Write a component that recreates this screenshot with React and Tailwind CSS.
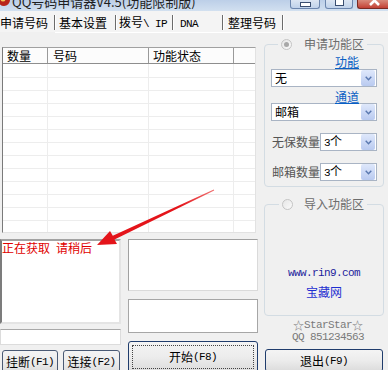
import React from 'react';

const MONO = "font-['Liberation_Mono',monospace] text-[11px] tracking-[-0.6px]";

const Asc = ({ children, className = '' }) => (
  <span className={`${MONO} ${className}`}>{children}</span>
);

const TabSep = () => (
  <div className="flex h-[15px] shrink-0">
    <div className="w-px bg-[#6b6b6b]" />
    <div className="w-px bg-white" />
  </div>
);

const Radio = ({ checked }) => (
  <span className="flex h-[11px] w-[11px] shrink-0 items-center justify-center rounded-full border border-[#c4c4c4] bg-linear-to-br from-[#e6e6e6] to-[#fafafa]">
    {checked && <span className="h-[5px] w-[5px] rounded-full bg-[#a8a8a8]" />}
  </span>
);

const Combo = ({ value, className = '' }) => (
  <div className={`flex h-[18px] items-center border border-[#a9b4c4] bg-white ${className}`}>
    <span className="flex-1 pl-[3px] leading-[14px]">{value}</span>
    <span className="mr-px flex h-[16px] w-[14px] items-center justify-center rounded-[2px] bg-linear-to-b from-[#dfe8fb] to-[#b9caf0]">
      <svg width="7" height="5" viewBox="0 0 7 5">
        <polyline points="0.7,0.7 3.5,3.7 6.3,0.7" fill="none" stroke="#5a78b0" strokeWidth="1.4" />
      </svg>
    </span>
  </div>
);

const WinButton = ({ children, primary, focus, className = '' }) => (
  <div
    className={`flex items-center justify-center rounded-[3px] border bg-linear-to-b from-[#f4f4f4] via-[#ececec] to-[#dcdcdc] ${
      primary ? 'border-[#1f3c6c]' : 'border-[#4a5a74]'
    } ${className}`}
  >
    {focus ? (
      <div className="flex h-[calc(100%-6px)] w-[calc(100%-6px)] items-center justify-center border border-dotted border-[#444]">
        {children}
      </div>
    ) : (
      children
    )}
  </div>
);

const rows = Array.from({ length: 13 });

export default function App() {
  return (
    <div className="relative h-[370px] w-[388px] overflow-hidden bg-[#f0f0f0] font-['Noto_Sans_CJK_SC',sans-serif] text-[12px] leading-[14px] text-black">
      {/* Title bar */}
      <div className="flex h-[11px] overflow-hidden bg-linear-to-b from-[#bccfe8] to-[#d2e0f0]">
        <svg width="12" height="11" className="shrink-0">
          <circle cx="4" cy="0" r="6" fill="#b8241a" />
          <circle cx="3" cy="-1" r="2.5" fill="#f2c45a" />
        </svg>
        <span className="-mt-[5px] whitespace-nowrap text-[13px] leading-[13px] text-[#1e1e1e]">
          QQ号码申请器V4.5(功能限制版)
        </span>
        <div className="ml-auto flex items-start">
          <div className="flex h-[9px] w-[30px] justify-center rounded-b-[3px] border border-t-0 border-[#6c86ad] bg-linear-to-b from-[#dbe5f2] to-[#c0d2ea]">
            <div className="mt-[2px] h-[5px] w-[11px] border border-[#3a4e70] bg-white" />
          </div>
          <div className="ml-[5px] flex h-[9px] w-[28px] justify-center rounded-b-[3px] border border-t-0 border-[#6c86ad] bg-linear-to-b from-[#dbe5f2] to-[#c0d2ea]">
            <div className="-mt-[2px] h-[8px] w-[9px] border border-[#3a4e70] bg-white" />
          </div>
          <div className="ml-[4px] h-[9px] w-[31px] rounded-bl-[3px] border border-t-0 border-r-0 border-[#7a2b24] bg-linear-to-b from-[#d88a7c] to-[#c23f35]">
            <svg width="31" height="9">
              <path d="M12 -4 L21 5 M21 -4 L12 5" stroke="white" strokeWidth="2.6" />
            </svg>
          </div>
        </div>
      </div>

      {/* Tabs */}
      <div className="flex h-[21px] items-center bg-[#f4f4f4] pt-[2px] whitespace-nowrap">
        <div className="w-[54px] shrink-0">申请号码</div>
        <TabSep />
        <div className="w-[59px] shrink-0 pl-[3px]">基本设置</div>
        <TabSep />
        <div className="w-[55px] shrink-0 pl-[2px]">
          拨号<Asc>\ IP</Asc>
        </div>
        <TabSep />
        <div className="w-[48px] shrink-0 pl-[6px]">
          <Asc>DNA</Asc>
        </div>
        <TabSep />
        <div className="w-[58px] shrink-0 pl-[4px]">整理号码</div>
        <TabSep />
      </div>
      <div className="ml-[55px] h-px bg-white" />

      <div className="flex">
        {/* Left side */}
        <div className="w-[258px] shrink-0">
          {/* List view */}
          <div className="ml-[2px] mt-[14px] h-[186px] w-[254px] overflow-hidden border border-t-[#a0a0a0] border-l-[#7a7a7a] border-r-[#e2e2e2] border-b-[#e2e2e2] bg-white">
            <div className="flex h-[16px] items-center border-b border-[#8e8e8e] bg-[#fcfcfc] leading-[15px]">
              <div className="h-full w-[45px] border-r border-[#9a9a9a] pl-[4px]">数量</div>
              <div className="h-full w-[101px] border-r border-[#9a9a9a] pl-[5px]">号码</div>
              <div className="h-full w-[85px] border-r border-[#9a9a9a] pl-[4px]">功能状态</div>
              <div className="h-full flex-1" />
            </div>
            {rows.map((_, i) => (
              <div
                key={i}
                className={`flex border-b border-[#ededed] ${i === 0 ? 'h-[14px]' : 'h-[13px]'}`}
              >
                <div className="w-[45px] border-r border-[#ededed]" />
                <div className="w-[101px] border-r border-[#ededed]" />
                <div className="w-[85px] border-r border-[#ededed]" />
                <div className="flex-1" />
              </div>
            ))}
          </div>

          {/* Bottom area */}
          <div className="mt-[6px] flex">
            <div className="w-[121px] shrink-0">
              <div className="h-[85px] border-2 border-t-[#a2a2a2] border-l-[#7c7c7c] border-r-[#e4e4e4] border-b-[#e4e4e4] bg-white text-[#e00000]">
                正在获取<span className="inline-block w-[6px]" />请稍后
              </div>
              <div className="mt-[5px] h-[16px] border border-[#dcdcdc] border-t-[#a8a8a8] bg-white" />
              <div className="mt-[5px] flex gap-[5px] pl-[2px]">
                <WinButton className="h-[24px] w-[56px]">
                  挂断<Asc>(F1)</Asc>
                </WinButton>
                <WinButton className="h-[24px] w-[57px]">
                  连接<Asc>(F2)</Asc>
                </WinButton>
              </div>
            </div>

            <div className="ml-[7px] w-[130px] shrink-0">
              <div className="h-[52px] border border-t-[#a0a0a0] border-l-[#a0a0a0] border-r-[#dadada] border-b-[#dadada] bg-white" />
              <div className="mt-[8px] h-[34px] border border-[#a6a6a6] bg-white" />
              <WinButton primary focus className="mt-[8px] h-[32px] w-full">
                开始<Asc>(F8)</Asc>
              </WinButton>
            </div>
          </div>
        </div>

        {/* Right side */}
        <div className="ml-[6px] w-[120px] shrink-0">
          <fieldset className="mt-[4px] rounded-[4px] border border-[#d3dce3] px-[6px] pb-[5px]">
            <legend className="ml-[7px] flex h-[14px] items-center px-[3px]">
              <Radio checked />
              <span className="ml-[12px] text-[#6d6d6d]">申请功能区</span>
            </legend>
            <div className="mt-[4px] h-[13px] pr-[18px] text-right leading-[13px] text-[#0a5fc4] underline">
              功能
            </div>
            <Combo value="无" className="mt-[1px]" />
            <div className="mt-[3px] h-[13px] pr-[18px] text-right leading-[13px] text-[#0a5fc4] underline">
              通道
            </div>
            <Combo value="邮箱" />
            <div className="mt-[12px] flex items-center">
              <span className="w-[49px] shrink-0 pl-[1px] text-[#555]">无保数量</span>
              <Combo value={<><Asc>3</Asc>个</>} className="flex-1" />
            </div>
            <div className="mt-[12px] flex items-center">
              <span className="w-[49px] shrink-0 pl-[1px] text-[#555]">邮箱数量</span>
              <Combo value={<><Asc>3</Asc>个</>} className="flex-1" />
            </div>
          </fieldset>

          <fieldset className="mt-[10px] h-[119px] rounded-[4px] border border-[#d3dce3] px-[6px]">
            <legend className="ml-[8px] flex h-[14px] items-center px-[3px]">
              <Radio />
              <span className="ml-[11px] text-[#6d6d6d]">导入功能区</span>
            </legend>
            <div className={`mt-[55px] text-center leading-[14px] text-[#1c1c9c] ${MONO}`}>www.rin9.com</div>
            <div className="mt-[5px] text-center leading-[14px] text-[#1f2fd0]">宝藏网</div>
          </fieldset>

          <div className="mt-[4px] pl-[8px] text-[#7a7a7a]">
            <div className="flex h-[11px] items-center justify-center">
              <span className="text-[11px] leading-[11px]">☆</span>
              <Asc className="leading-[11px]">StarStar</Asc>
              <span className="text-[11px] leading-[11px]">☆</span>
            </div>
            <div className="flex h-[12px] items-end justify-center">
              <Asc className="leading-[11px]">QQ 851234563</Asc>
            </div>
          </div>

          <WinButton primary className="ml-px mt-[6px] h-[23px] w-[118px]">
            退出<Asc>(F9)</Asc>
          </WinButton>
        </div>
      </div>

      {/* Red annotation arrow */}
      <svg className="pointer-events-none absolute left-0 top-0" width="388" height="370">
        <defs>
          <linearGradient id="arr" x1="97" y1="245" x2="214" y2="190" gradientUnits="userSpaceOnUse">
            <stop offset="0" stopColor="#e4141a" />
            <stop offset="0.7" stopColor="#e4141a" />
            <stop offset="1" stopColor="#f07070" />
          </linearGradient>
        </defs>
        <polygon
          points="97,245 117,244 114.5,239.5 214.2,190.4 213.8,189.6 112.8,235.7 110,231"
          fill="url(#arr)"
        />
      </svg>
    </div>
  );
}
